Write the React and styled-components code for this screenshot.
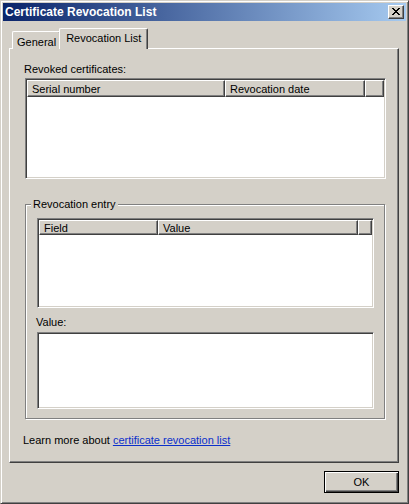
import React from 'react';
import styled, { createGlobalStyle } from 'styled-components';

const GlobalStyle = createGlobalStyle`
  body {
    margin: 0;
    background: #ffffff;
    font-family: "Liberation Sans", Arial, sans-serif;
    font-size: 11px;
    color: #000;
  }
`;

const Window = styled.div`
  width: 409px;
  height: 504px;
  box-sizing: border-box;
  background: #d4d0c8;
  border: 1px solid;
  border-color: #d4d0c8 #404040 #404040 #d4d0c8;
  box-shadow: inset 1px 1px #ffffff, inset -1px -1px #808080;
  padding: 2px;
  display: flex;
  flex-direction: column;
`;

const TitleBar = styled.div`
  height: 18px;
  flex: none;
  display: flex;
  align-items: center;
  justify-content: space-between;
  padding-left: 2px;
  background: linear-gradient(to right, #0a246a, #a6caf0);
  color: #ffffff;
  font-weight: bold;
  font-size: 12px;
`;

const CloseButton = styled.div`
  width: 16px;
  height: 14px;
  box-sizing: border-box;
  margin-right: 2px;
  background: #d4d0c8;
  border: 1px solid;
  border-color: #ffffff #404040 #404040 #ffffff;
  box-shadow: inset -1px -1px #808080;
  display: flex;
  align-items: center;
  justify-content: center;
  padding: 0 1px 1px 0;
`;

const Body = styled.div`
  flex: 1;
  display: flex;
  flex-direction: column;
  padding: 8px 7px 8px 6px;
`;

const TabStrip = styled.div`
  height: 20px;
  display: flex;
  align-items: flex-end;
  padding-left: 3px;
  margin-bottom: -1px;
  position: relative;
  z-index: 1;
`;

const Tab = styled.div`
  box-sizing: border-box;
  height: ${p => (p.$active ? '21px' : '18px')};
  margin: ${p => (p.$active ? '0 -2px' : '0')};
  position: relative;
  z-index: ${p => (p.$active ? 2 : 1)};
  padding: ${p => (p.$active ? '3px 6px 0' : '4px 4px 0')};
  background: #d4d0c8;
  border-top: 1px solid #ffffff;
  border-left: 1px solid #ffffff;
  border-right: 1px solid #404040;
  border-top-left-radius: 2px;
  border-top-right-radius: 2px;
  box-shadow: inset -1px 0 #808080;
  white-space: nowrap;
`;

const Panel = styled.div`
  flex: 1;
  box-sizing: border-box;
  border: 1px solid;
  border-color: #ffffff #404040 #404040 #ffffff;
  box-shadow: inset -1px -1px #808080;
  padding: 14px 12px 0 15px;
  display: flex;
  flex-direction: column;
`;

const Label = styled.div`
  height: 13px;
  line-height: 13px;
  margin-top: ${p => p.$top || 0}px;
  margin-left: -1px;
  white-space: nowrap;
`;

const ListView = styled.div`
  height: ${p => p.$height}px;
  margin-top: ${p => p.$top || 0}px;
  box-sizing: border-box;
  flex: none;
  background: #ffffff;
  border: 1px solid;
  border-color: #808080 #ffffff #ffffff #808080;
  box-shadow: inset 1px 1px #404040, inset -1px -1px #d4d0c8;
  padding: 1px;
  display: flex;
  flex-direction: column;
`;

const HeaderRow = styled.div`
  height: ${p => p.$height}px;
  display: flex;
  flex: none;
`;

const HeaderCell = styled.div`
  box-sizing: border-box;
  width: ${p => (p.$width ? `${p.$width}px` : 'auto')};
  flex: ${p => (p.$width ? 'none' : 1)};
  background: #d4d0c8;
  border: 1px solid;
  border-color: #ffffff #404040 #404040 #ffffff;
  box-shadow: inset -1px -1px #808080;
  padding-left: 4px;
  display: flex;
  align-items: center;
  white-space: nowrap;
  overflow: hidden;
`;

const GroupBox = styled.div`
  position: relative;
  margin-top: 25px;
  margin-right: 1px;
  height: 215px;
  box-sizing: border-box;
  border: 1px solid #808080;
  box-shadow: inset 1px 1px #ffffff, 1px 1px #ffffff;
  padding: 13px 10px 0 11px;
  display: flex;
  flex-direction: column;
`;

const GroupTitle = styled.span`
  position: absolute;
  top: -7px;
  left: 5px;
  padding: 0 2px;
  height: 13px;
  line-height: 13px;
  background: #d4d0c8;
`;

const TextArea = styled.div`
  height: 77px;
  margin-top: 3px;
  box-sizing: border-box;
  background: #ffffff;
  border: 1px solid;
  border-color: #808080 #ffffff #ffffff #808080;
  box-shadow: inset 1px 1px #404040, inset -1px -1px #d4d0c8;
`;

const LearnMore = styled.div`
  margin-top: 15px;
  margin-left: -2px;
  height: 13px;
  line-height: 13px;
`;

const Link = styled.a`
  color: #0b2fcb;
  text-decoration: underline;
  cursor: pointer;
`;

const Footer = styled.div`
  margin-top: 8px;
  height: 22px;
  display: flex;
  justify-content: flex-end;
`;

const Button = styled.div`
  width: 75px;
  height: 22px;
  box-sizing: border-box;
  border: 1px solid #000000;
  box-shadow: inset 1px 1px #ffffff, inset -1px -1px #404040, inset -2px -2px #808080;
  display: flex;
  align-items: center;
  justify-content: center;
`;

function CloseGlyph() {
  const rows = [
    'XX....XX',
    '.XX..XX.',
    '..XXXX..',
    '...XX...',
    '..XXXX..',
    '.XX..XX.',
    'XX....XX',
  ];
  const rects = [];
  rows.forEach((row, y) => {
    row.split('').forEach((c, x) => {
      if (c === 'X') rects.push(<rect key={`${x}-${y}`} x={x} y={y} width="1" height="1" />);
    });
  });
  return (
    <svg width="8" height="7" viewBox="0 0 8 7" fill="#000" shapeRendering="crispEdges">
      {rects}
    </svg>
  );
}

export default function App() {
  return (
    <>
      <GlobalStyle />
      <Window>
        <TitleBar>
          <span>Certificate Revocation List</span>
          <CloseButton>
            <CloseGlyph />
          </CloseButton>
        </TitleBar>
        <Body>
          <TabStrip>
            <Tab>General</Tab>
            <Tab $active>Revocation List</Tab>
          </TabStrip>
          <Panel>
            <Label>Revoked certificates:</Label>
            <ListView $height={101} $top={2}>
              <HeaderRow $height={17}>
                <HeaderCell $width={198}>Serial number</HeaderCell>
                <HeaderCell $width={140}>Revocation date</HeaderCell>
                <HeaderCell />
              </HeaderRow>
            </ListView>
            <GroupBox>
              <GroupTitle>Revocation entry</GroupTitle>
              <ListView $height={90}>
                <HeaderRow $height={15}>
                  <HeaderCell $width={119}>Field</HeaderCell>
                  <HeaderCell $width={200}>Value</HeaderCell>
                  <HeaderCell />
                </HeaderRow>
              </ListView>
              <Label $top={8}>Value:</Label>
              <TextArea />
            </GroupBox>
            <LearnMore>
              Learn more about <Link>certificate revocation list</Link>
            </LearnMore>
          </Panel>
          <Footer>
            <Button>OK</Button>
          </Footer>
        </Body>
      </Window>
    </>
  );
}
